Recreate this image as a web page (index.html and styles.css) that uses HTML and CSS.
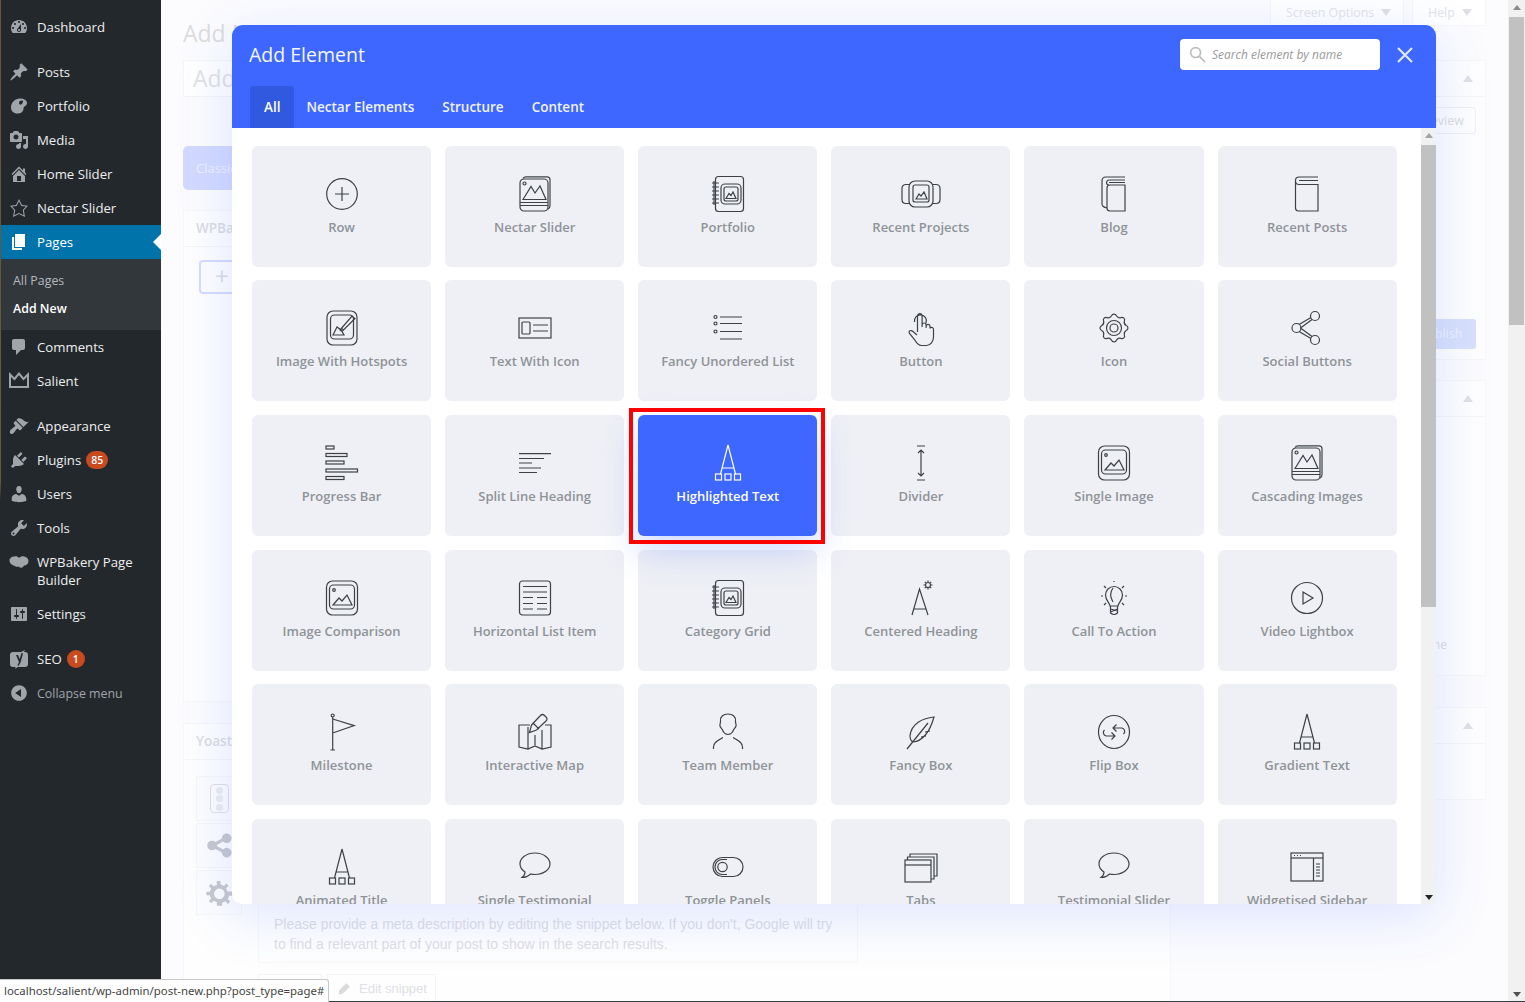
FILE: index.html
```html
<!DOCTYPE html>
<html lang="en">
<head>
<meta charset="utf-8">
<title>Add New Page</title>
<link rel="stylesheet" href="styles.css">
</head>
<body>
<svg class="defs" aria-hidden="true">
  <symbol id="i-row" viewBox="0 0 44 44"><circle cx="22" cy="22" r="15.3"/><path d="M22 15v14M15 22h14"/></symbol>
  <symbol id="i-stack" viewBox="0 0 44 44"><path d="M10 6.500q1-1.700 3-1.700h21q3 0 3 3v26q0 2.500-2.200 3.500"/><rect x="7" y="7" width="28" height="32" rx="4"/><path d="M10 27.500l8-13 4 6.500 5-7 6 13.500z"/><circle cx="11.500" cy="11.500" r="1.500"/><path d="M7 30.500h28M7 33.500h28"/></symbol>
  <symbol id="i-notebook" viewBox="0 0 44 44"><rect x="9.500" y="4.500" width="28" height="35" rx="3"/><rect x="15" y="12" width="20" height="20" rx="4"/><rect x="18" y="15" width="14" height="14" rx="2"/><path d="M20 26.500l3-5 2 2 2-3.500 3 6.500zM6 11h7M6 15h7M6 19h7M6 23h7M6 27h7M6 31h7M8 9v24"/></symbol>
  <symbol id="i-projects" viewBox="0 0 44 44"><rect x="10" y="9" width="24" height="26" rx="6"/><rect x="14" y="13" width="16" height="17" rx="2"/><path d="M17 27l3-5 2 2 3-4 3 7zM10 12.500H7q-4 0-4 4v11q0 4 4 4h3M34 12.500h3q4 0 4 4v11q0 4-4 4h-3"/></symbol>
  <symbol id="i-blog" viewBox="0 0 44 44"><path d="M33 13v26H18q-3 0-3-3V16q0-3 3-3zM33 5H14q-4 0-4 4v23q0 3 5 4M33 8H17q-2 0-2.500 2.500 0 2.500 2.500 2.500M33 10.500H17"/></symbol>
  <symbol id="i-book" viewBox="0 0 44 44"><path d="M33 5H14q-3.500 0-3.500 3.500v27.500q0 3 3 3H33V12.500H14q-3.500 0-3.500-3.500M33 8.500H14"/></symbol>
  <symbol id="i-hotspot" viewBox="0 0 44 44"><rect x="7" y="5" width="30" height="34" rx="6"/><rect x="10.500" y="9" width="23" height="24" rx="4"/><path d="M13 29l4-8 4 3 3 5zM20 24l12-14 3 2.500-13 13zM21 22l2.500 2"/></symbol>
  <symbol id="i-texticon" viewBox="0 0 44 44"><rect x="6" y="12" width="32" height="20"/><rect x="9" y="16" width="8" height="12" rx="1"/><path class="thick" d="M20 19h15M20 25h15"/></symbol>
  <symbol id="i-list" viewBox="0 0 44 44"><circle cx="9.500" cy="11" r="1.500"/><circle cx="9.500" cy="17.500" r="1.500"/><circle cx="9.500" cy="25.500" r="1.500"/><path d="M14 11h22M14 17.500h22M14 25.500h22M14 33h22"/></symbol>
  <symbol id="i-hand" viewBox="0 0 44 44"><path d="M15.500 16a6 6 0 1 1 11.500 1M18.500 26V10a2.300 2.300 0 0 1 4.600 0v11M23.100 19a2 2 0 0 1 4 0v3M27.100 20a2 2 0 0 1 3.900 0v2.500M31 22a2 2 0 0 1 3.500 1.500v7.500c0 4.500-3 8.500-7 8.500h-5c-3 0-5-2.500-7-6l-5-6c-1.500-2.500 1.500-4 3.500-2l4 3.500"/></symbol>
  <symbol id="i-gear" viewBox="0 0 44 44"><path transform="rotate(-11.250 22 22)" d="M34.500 22A2.600 2.600 0 0 1 33.550 26.780A4 4 0 0 0 30.840 30.840A2.600 2.600 0 0 1 26.780 33.550A4 4 0 0 0 22 34.500A2.600 2.600 0 0 1 17.220 33.550A4 4 0 0 0 13.160 30.840A2.600 2.600 0 0 1 10.450 26.780A4 4 0 0 0 9.500 22A2.600 2.600 0 0 1 10.450 17.220A4 4 0 0 0 13.160 13.160A2.600 2.600 0 0 1 17.220 10.450A4 4 0 0 0 22 9.500A2.600 2.600 0 0 1 26.780 10.450A4 4 0 0 0 30.840 13.160A2.600 2.600 0 0 1 33.550 17.220A4 4 0 0 0 34.500 22Z"/><circle cx="22" cy="22" r="7.500"/><circle cx="22" cy="22" r="4"/></symbol>
  <symbol id="i-share" viewBox="0 0 44 44"><circle cx="11.500" cy="22" r="4.500"/><circle cx="30" cy="10" r="4.500"/><circle cx="30" cy="34" r="4.500"/><path d="M14 18.500l12-7M15.500 22l11.500-8.500M15.500 22l11.500 8.500M14 25.500l12 7"/></symbol>
  <symbol id="i-bars" viewBox="0 0 44 44"><rect x="6" y="5" width="8" height="3"/><rect x="6" y="12.500" width="21" height="3"/><rect x="6" y="20" width="18" height="3"/><rect x="6" y="28" width="31.500" height="3"/><rect x="6" y="35.500" width="18" height="3"/></symbol>
  <symbol id="i-split" viewBox="0 0 44 44"><path class="thick" d="M6 12.600h32M6 17.500h25M6 22h13M6 27h22M6 31.500h18"/></symbol>
  <symbol id="i-atext" viewBox="0 0 44 44"><path d="M22 4l-7.500 29M22 4l7.500 29M16 27h12"/><rect x="9.500" y="33" width="6" height="6"/><rect x="19" y="33" width="6" height="6"/><rect x="28.500" y="33" width="6" height="6"/></symbol>
  <symbol id="i-divider" viewBox="0 0 44 44"><path d="M18 5h8M18 39h8M22 9v26M19 12l3-3 3 3M19 32l3 3 3-3"/></symbol>
  <symbol id="i-image" viewBox="0 0 44 44"><rect x="6.500" y="5" width="31" height="34" rx="6"/><rect x="9.500" y="9" width="25" height="24" rx="4"/><circle cx="14" cy="14" r="1.300"/><path d="M13 29l6-7 3 3 5-6 5 10z"/></symbol>
  <symbol id="i-hlist" viewBox="0 0 44 44"><rect x="6.500" y="5" width="31" height="34" rx="3"/><path class="thick" d="M10 10.500h24M10 16h24M10 21.500h10M24 21.500h10M10 27.500h10M24 27.500h10M10 33h10M24 33h10"/></symbol>
  <symbol id="i-centered" viewBox="0 0 44 44"><path d="M13 39l7.500-26L29 39M15 33h12"/><circle cx="29" cy="9" r="2.500"/><path d="M29 4.500v1.500M29 12v1.500M24.500 9h1.500M32 9h1.500M25.800 5.800l1 1M31.200 11.200l1 1M25.800 12.200l1-1M31.200 6.800l1-1"/></symbol>
  <symbol id="i-bulb" viewBox="0 0 44 44"><path d="M18 30c0-3-4.500-5-4.500-11a8.500 8.500 0 0 1 17 0c0 6-4.500 8-4.500 11zM21 12c-3 4-3 9 0 14M18.500 30v7q3.500 3 7 0v-7M18.500 33l7 2M18.500 36l7-3M9 20h2M33 20h2M12 10l2 2M32 10l-2 2M12 29l2-2M32 29l-2-2M22 6v-1"/></symbol>
  <symbol id="i-play" viewBox="0 0 44 44"><circle cx="22" cy="22" r="15.500"/><path d="M18 16l10 6-10 6z"/></symbol>
  <symbol id="i-flag" viewBox="0 0 44 44"><circle cx="12.700" cy="5.500" r="1.500"/><path d="M12.700 7v33M10.500 40h4.500M12.700 9l21.500 6.600-21.500 7.400"/></symbol>
  <symbol id="i-map" viewBox="0 0 44 44"><path d="M17 15H6v22l9 2 7-3 7 3 9-2V15h-6M15 17v22M22 25v11M29 20v19M18.500 15l9-9.500q2-2 4 0l1.500 1.500q2 2 0 4l-9.500 9-7 2.500zM20 13l6 6"/></symbol>
  <symbol id="i-person" viewBox="0 0 44 44"><path d="M22 4c-5 0-8 3-7.500 7 .2 2-1 3-.5 5 .5 2 2 2.500 2.800 4.500.5 1.500 2.500 4 5.200 4s4.700-2.500 5.200-4c.8-2 2.300-2.500 2.800-4.500.5-2-.7-3-.5-5 .5-4-2.500-7-7.500-7zM7.500 39v-2c0-5 5-6.500 9.500-9.500M36.500 39v-2c0-5-5-6.500-9.500-9.500"/></symbol>
  <symbol id="i-feather" viewBox="0 0 44 44"><path d="M35 7C25 8 12 13 11 26c0 3 1 5 3 6 10-1 17-11 21-25zM8 39L29 13M26 22l5-1M22 27l5-1"/></symbol>
  <symbol id="i-flip" viewBox="0 0 44 44"><ellipse cx="22" cy="22" rx="15.500" ry="16.500"/><path d="M30 18H21M24.500 14.500L21 18l3.500 3.500M30 18a3.500 3.500 0 0 1 1.500 6M14 26h9M19.500 22.500L23 26l-3.500 3.500M14 26a3.500 3.500 0 0 1-1.500-6"/></symbol>
  <symbol id="i-bubble" viewBox="0 0 44 44"><path d="M22 8C13.200 8 7 13 7 19c0 3.500 2 6 5 8 0 2-1 4-3 5.500 4 0 7-2 8.500-3.500 1.500.3 3 .5 4.500.5 8.800 0 15-5 15-10.500S30.800 8 22 8z"/></symbol>
  <symbol id="i-toggle" viewBox="0 0 44 44"><rect x="7" y="12.500" width="30" height="19" rx="9.500"/><path d="M21 14.500h-4.500a7.500 7.500 0 0 0 0 15H21"/><circle cx="16.500" cy="22" r="4.700"/></symbol>
  <symbol id="i-tabs" viewBox="0 0 44 44"><rect x="6" y="15" width="26" height="22"/><path class="thick" d="M6 20h26"/><path d="M8.500 15v-3H35v22h-3M11 12V9h27v22h-3"/></symbol>
  <symbol id="i-widget" viewBox="0 0 44 44"><rect x="6" y="8" width="32" height="28"/><path class="thick" d="M6 13h32"/><path d="M28.500 13v23M9 10.500h1M12 10.500h1M15 10.500h1"/><path class="thick" d="M31 19h4M31 22h4M31 25h4M31 28h4M31 31h4"/></symbol>
</svg>

<div class="layout">
  <nav class="sidebar">
    <ul class="menu">
      <li class="item"><svg class="dash" viewBox="0 0 20 20"><path d="M3.760 16h12.480c1.100-1.370 1.760-3.110 1.760-5 0-4.420-3.580-8-8-8s-8 3.580-8 8c0 1.890.660 3.630 1.760 5zM10 4c.550 0 1 .450 1 1s-.450 1-1 1-1-.450-1-1 .450-1 1-1zM6 6c.550 0 1 .450 1 1s-.450 1-1 1-1-.450-1-1 .450-1 1-1zm8 0c.550 0 1 .450 1 1s-.450 1-1 1-1-.450-1-1 .450-1 1-1zm-5.370 5.550L12 7v6c0 1.100-.900 2-2 2s-2-.900-2-2c0-.570.240-1.080.630-1.450zM4 10c.550 0 1 .450 1 1s-.450 1-1 1-1-.450-1-1 .450-1 1-1zm12 0c.550 0 1 .450 1 1s-.450 1-1 1-1-.450-1-1 .450-1 1-1zm-5 3c0-.550-.450-1-1-1s-1 .450-1 1 .450 1 1 1 1-.450 1-1z"/></svg>Dashboard</li>
      <li class="item sep"><svg class="dash" viewBox="0 0 20 20"><path d="M10.440 3.020l1.820-1.820 6.360 6.350-1.830 1.820c-1.050-.680-2.480-.570-3.410.360l-.750.750c-.920.930-1.040 2.350-.350 3.410l-1.830 1.820-2.410-2.410-2.800 2.790c-.420.420-3.380 2.710-3.800 2.290s1.860-3.390 2.280-3.810l2.790-2.790L4.100 9.360l1.830-1.820c1.050.690 2.480.570 3.400-.360l.750-.750c.930-.920 1.050-2.350.360-3.410z"/></svg>Posts</li>
      <li class="item"><svg class="dash" viewBox="0 0 20 20"><path fill-rule="evenodd" d="M11 2.500c4 0 7 2 7 4.500 0 3-3.500 3-3.500 5.500 0 3-2.500 5-6 5C4.500 17.500 2 15 2 11.500 2 6.500 6 2.500 11 2.500zM12.500 4.500c-1.500 0-2.500 1-2.500 2.300S11 9 12 8.500s2-2 2-3-.5-1-1.500-1z"/></svg>Portfolio</li>
      <li class="item"><svg class="dash" viewBox="0 0 20 20"><path d="M13 11V4c0-.550-.450-1-1-1h-1.670L9 1H5L3.670 3H2c-.550 0-1 .450-1 1v7c0 .550.450 1 1 1h10c.550 0 1-.450 1-1zM7 4.500c1.380 0 2.500 1.120 2.500 2.500S8.380 9.500 7 9.500 4.500 8.380 4.500 7 5.620 4.500 7 4.500zM14 6h5v10.500c0 1.380-1.120 2.500-2.500 2.500S14 17.880 14 16.500s1.120-2.500 2.500-2.500c.170 0 .340.020.500.050V9h-3V6zm-4 8.050V13h2v3.500c0 1.380-1.120 2.500-2.500 2.500S7 17.880 7 16.500 8.120 14 9.500 14c.170 0 .340.020.500.050z"/></svg>Media</li>
      <li class="item"><svg class="dash" viewBox="0 0 20 20"><path d="M16 8.500l1.530 1.530-1.060 1.060L10 4.620l-6.470 6.470-1.060-1.060L10 2.500l4 4v-2h2v4zm-6-2.460l6 5.990V18H4v-5.970zM12 17v-5H8v5h4z"/></svg>Home Slider</li>
      <li class="item"><svg class="dash" viewBox="0 0 20 20"><path d="M10 1L7 7l-6 .750 4.130 4.620L4 19l6-3 6 3-1.120-6.630L19 7.750 13 7zm0 2.240l2.340 4.690 4.650.580-3.180 3.560.870 5.150L10 14.880l-4.680 2.340.870-5.150-3.180-3.560 4.650-.580z"/></svg>Nectar Slider</li>
      <li class="item active"><svg class="dash" viewBox="0 0 20 20"><path d="M6 15V2h10v13H6zm-1 1h8v2H3V5h2v11z"/></svg>Pages</li>
      <li class="submenu">
        <div class="subitem">All Pages</div>
        <div class="subitem current">Add New</div>
      </li>
      <li class="item"><svg class="dash" viewBox="0 0 20 20"><path d="M5 2h9c1.100 0 2 .900 2 2v7c0 1.100-.900 2-2 2h-2l-5 5v-5H5c-1.100 0-2-.900-2-2V4c0-1.100.900-2 2-2z"/></svg>Comments</li>
      <li class="item"><svg class="dash crown" viewBox="0 0 20 20"><path d="M1 3.500v12.500h18V3.500l-4.500 4.500L10 2.500 5.500 8z"/></svg>Salient</li>
      <li class="item sep"><svg class="dash" viewBox="0 0 20 20"><path d="M14.480 11.060L7.410 3.990l1.500-1.500c.500-.560 2.300-.470 3.510.320 1.210.800 1.430 1.280 2.910 2.100 1.180.640 2.450 1.260 4.450.850zm-.710.710L6.700 4.700 4.930 6.470c-.390.390-.390 1.020 0 1.410l1.060 1.060c.390.390.390 1.030 0 1.420-.600.600-1.430 1.110-2.210 1.690-.350.260-.700.530-1.010.840C1.430 13.230.400 15.500 1 17c.700 1.500 3 1.300 4.270-.800.310-.310.580-.660.840-1.010.580-.780 1.090-1.610 1.690-2.210.390-.390 1.020-.390 1.410 0l1.060 1.060c.390.390 1.020.390 1.410 0z"/></svg>Appearance</li>
      <li class="item"><svg class="dash" viewBox="0 0 20 20"><path d="M13.110 4.360L9.870 7.600 8 5.730l3.240-3.240c.350-.340 1.050-.200 1.560.320.520.510.660 1.210.310 1.550zm-8 1.770l.910-1.120 9.010 9.010-1.190.840c-.710.710-2.630 1.160-3.820 1.160H6.140L4.900 17.260c-.590.590-1.540.590-2.120 0-.590-.580-.590-1.530 0-2.120l1.240-1.240v-3.880c0-1.130.400-3.190 1.090-3.890zm7.260 3.970l3.240-3.240c.340-.350 1.040-.210 1.550.310.520.510.660 1.210.310 1.550l-3.240 3.250z"/></svg>Plugins<span class="badge wide">85</span></li>
      <li class="item"><svg class="dash" viewBox="0 0 20 20"><path d="M10 9.250c-2.270 0-2.730-3.440-2.730-3.440C7 4.020 7.820 2 9.970 2c2.160 0 2.980 2.020 2.710 3.810 0 0-.410 3.440-2.680 3.440zm0 2.570L12.720 10c2.390 0 4.520 2.330 4.520 4.530v2.490s-3.650 1.130-7.240 1.130c-3.650 0-7.240-1.130-7.240-1.130v-2.490c0-2.250 1.940-4.480 4.470-4.480z"/></svg>Users</li>
      <li class="item"><svg class="dash" viewBox="0 0 20 20"><path d="M16.680 9.770c-1.340 1.340-3.300 1.670-4.950.990l-5.410 6.520c-.990.990-2.590.990-3.580 0s-.990-2.590 0-3.570l6.520-5.420c-.680-1.650-.350-3.610.990-4.950 1.280-1.280 3.120-1.620 4.720-1.060l-2.890 2.890 2.820 2.820 2.860-2.870c.530 1.580.180 3.390-1.080 4.650zM3.810 16.210c.400.390 1.040.390 1.430 0 .400-.400.400-1.040 0-1.430-.390-.400-1.030-.400-1.430 0-.390.390-.390 1.030 0 1.430z"/></svg>Tools</li>
      <li class="item tall"><svg class="dash" viewBox="0 0 20 20"><path d="M5.500 3.500C7.500 3 9 3.800 10 5c1.300-1.300 3.500-2 5.500-1.500 2.500.5 4 2.500 4 4.500 0 2.500-2 4.500-4.500 4.500-.5 1.500-2 2.500-3.500 2-1 0-1.500-.5-2-1-1 .5-2.500.5-3.500-.5C3.500 12.500.5 10.500.5 7.500.5 5 3 3.500 5.500 3.500z"/></svg><span>WPBakery Page Builder</span></li>
      <li class="item"><svg class="dash" viewBox="0 0 20 20"><path d="M18 16V4c0-.550-.450-1-1-1H3c-.550 0-1 .450-1 1v12c0 .550.450 1 1 1h14c.550 0 1-.450 1-1zM8 11h1c.550 0 1 .450 1 1s-.450 1-1 1H8v1.500c0 .280-.220.500-.500.500s-.500-.220-.500-.500V13H6c-.550 0-1-.450-1-1s.450-1 1-1h1V5.500c0-.280.220-.500.500-.500s.500.220.500.500V11zm5-2h-1c-.550 0-1-.450-1-1s.450-1 1-1h1V5.500c0-.280.220-.500.500-.500s.500.220.500.500V7h1c.550 0 1 .450 1 1s-.450 1-1 1h-1v5.500c0 .280-.220.500-.500.500s-.500-.220-.500-.500V9z"/></svg>Settings</li>
      <li class="item sep"><svg class="dash" viewBox="0 0 20 20"><path fill-rule="evenodd" d="M4 3h8l4-2-1 2h1q3 0 3 3v9q0 3-3 3H8.500l-2 2v-2H4q-3 0-3-3V6q0-3 3-3zM7 6l3 7-1.500 3 1 1 2-3.500L14 4.500 12.500 4l-1.800 6L9 6z"/></svg>SEO<span class="badge">1</span></li>
      <li class="item collapse"><svg class="dash" viewBox="0 0 20 20"><path d="M10 2.160c4.330 0 7.840 3.510 7.840 7.840s-3.510 7.840-7.840 7.840S2.160 14.330 2.160 10 5.710 2.160 10 2.160zm2 11.720V6.120L6.180 9.970z"/></svg>Collapse menu</li>
    </ul>
  </nav>

  <main class="page">
    <header class="page-head">
      <h1 class="page-title">Add New Page</h1>
      <div class="screen-tabs">
        <div class="screen-tab opts">Screen Options<i class="tri down faint"></i></div>
        <div class="screen-tab help">Help<i class="tri down faint"></i></div>
      </div>
    </header>
    <div class="columns">
      <div class="col-main">
        <div class="title-input">Add title</div>
        <div class="classic-btn">Classic Mode</div>
        <section class="panel builder">
          <div class="panel-head">WPBakery Page Builder</div>
          <div class="add-btn">+</div>
        </section>
        <section class="panel yoast">
          <div class="panel-head">Yoast SEO</div>
          <div class="yoast-body">
            <div class="yoast-tabs">
              <div class="yoast-tab"><div class="traffic"><b></b><b></b><b></b></div></div>
              <div class="yoast-tab"><svg class="yoast-icon" viewBox="0 0 24 24"><path d="M18 2a4 4 0 1 1-3 6.700L9.800 11.500a4 4 0 0 1 0 1l5.200 2.800A4 4 0 1 1 14 18v-.3l-5.300-2.900a4 4 0 1 1 0-5.600L14 6.300V6a4 4 0 0 1 4-4z"/></svg></div>
              <div class="yoast-tab"><svg class="yoast-icon big" viewBox="0 0 20 20"><path d="M18 12h-2.180c-.170.700-.470 1.350-.850 1.940l1.540 1.540-1.430 1.430-1.540-1.540c-.590.380-1.240.680-1.940.850V18H8.400v-2.180c-.700-.170-1.350-.470-1.940-.850l-1.540 1.540-1.430-1.430 1.540-1.540c-.380-.590-.680-1.240-.850-1.940H2V9.600h2.180c.170-.700.470-1.350.850-1.940L3.490 6.120l1.430-1.430 1.540 1.540c.590-.380 1.240-.680 1.940-.850V3h2.200v2.180c.700.170 1.350.470 1.940.850l1.540-1.540 1.430 1.430-1.540 1.540c.380.590.680 1.240.850 1.940H18V12zm-8.100 2a3.200 3.200 0 1 0 0-6.400 3.200 3.200 0 0 0 0 6.400z"/></svg></div>
            </div>
            <div class="yoast-content">
              <div class="snippet">Please provide a meta description by editing the snippet below. If you don't, Google will try to find a relevant part of your post to show in the search results.</div>
              <div class="snippet-actions">
                <div class="ghost-btn small"></div>
                <div class="ghost-btn"><svg class="pencil" viewBox="0 0 20 20"><path d="M13.890 3.390l2.710 2.720c.460.460.420 1.240.030 1.640l-8.010 8.020-5.560 1.160 1.160-5.580s7.600-7.630 7.990-8.030c.390-.390 1.220-.390 1.680.070z"/></svg>Edit snippet</div>
              </div>
            </div>
          </div>
        </section>
      </div>
      <aside class="col-side">
        <section class="panel publish">
          <div class="panel-head side-head"><span>Publish</span><i class="tri up faint"></i></div>
          <div class="side-actions"><div class="preview-btn">Preview</div></div>
          <div class="side-actions"><div class="publish-btn">Publish</div></div>
        </section>
        <section class="panel attrs">
          <div class="panel-head side-head"><span>Page Attributes</span><i class="tri up faint"></i></div>
          <p class="side-note">If you need help, use the Help tab above the screen title.</p>
        </section>
        <section class="panel featured">
          <div class="panel-head side-head"><span>Featured Image</span><i class="tri up faint"></i></div>
        </section>
      </aside>
    </div>
  </main>

  <div class="page-scroll">
    <i class="tri up"></i>
    <div class="page-thumb"></div>
    <i class="tri down end"></i>
  </div>
</div>

<section class="modal">
  <header class="modal-head">
    <div class="modal-top">
      <h2 class="modal-title">Add Element</h2>
      <div class="search">
        <svg class="search-icon" viewBox="0 0 18 18"><circle cx="7" cy="7" r="5.200"/><path d="M11 11l6 6"/></svg>
        <span>Search element by name</span>
      </div>
      <svg class="close" viewBox="0 0 16 16"><path d="M1 1l14 14M15 1L1 15"/></svg>
    </div>
    <div class="tabs">
      <div class="tab selected">All</div>
      <div class="tab">Nectar Elements</div>
      <div class="tab">Structure</div>
      <div class="tab">Content</div>
    </div>
  </header>
  <div class="modal-body">
    <div class="elements">
      <div class="card"><svg class="ico"><use href="#i-row"/></svg><span>Row</span></div>
      <div class="card"><svg class="ico"><use href="#i-stack"/></svg><span>Nectar Slider</span></div>
      <div class="card"><svg class="ico"><use href="#i-notebook"/></svg><span>Portfolio</span></div>
      <div class="card"><svg class="ico"><use href="#i-projects"/></svg><span>Recent Projects</span></div>
      <div class="card"><svg class="ico"><use href="#i-blog"/></svg><span>Blog</span></div>
      <div class="card"><svg class="ico"><use href="#i-book"/></svg><span>Recent Posts</span></div>

      <div class="card"><svg class="ico"><use href="#i-hotspot"/></svg><span>Image With Hotspots</span></div>
      <div class="card"><svg class="ico"><use href="#i-texticon"/></svg><span>Text With Icon</span></div>
      <div class="card"><svg class="ico"><use href="#i-list"/></svg><span>Fancy Unordered List</span></div>
      <div class="card"><svg class="ico"><use href="#i-hand"/></svg><span>Button</span></div>
      <div class="card"><svg class="ico"><use href="#i-gear"/></svg><span>Icon</span></div>
      <div class="card"><svg class="ico"><use href="#i-share"/></svg><span>Social Buttons</span></div>

      <div class="card"><svg class="ico"><use href="#i-bars"/></svg><span>Progress Bar</span></div>
      <div class="card"><svg class="ico"><use href="#i-split"/></svg><span>Split Line Heading</span></div>
      <div class="card hover"><svg class="ico"><use href="#i-atext"/></svg><span>Highlighted Text</span></div>
      <div class="card"><svg class="ico"><use href="#i-divider"/></svg><span>Divider</span></div>
      <div class="card"><svg class="ico"><use href="#i-image"/></svg><span>Single Image</span></div>
      <div class="card"><svg class="ico"><use href="#i-stack"/></svg><span>Cascading Images</span></div>

      <div class="card"><svg class="ico"><use href="#i-image"/></svg><span>Image Comparison</span></div>
      <div class="card"><svg class="ico"><use href="#i-hlist"/></svg><span>Horizontal List Item</span></div>
      <div class="card"><svg class="ico"><use href="#i-notebook"/></svg><span>Category Grid</span></div>
      <div class="card"><svg class="ico"><use href="#i-centered"/></svg><span>Centered Heading</span></div>
      <div class="card"><svg class="ico"><use href="#i-bulb"/></svg><span>Call To Action</span></div>
      <div class="card"><svg class="ico"><use href="#i-play"/></svg><span>Video Lightbox</span></div>

      <div class="card"><svg class="ico"><use href="#i-flag"/></svg><span>Milestone</span></div>
      <div class="card"><svg class="ico"><use href="#i-map"/></svg><span>Interactive Map</span></div>
      <div class="card"><svg class="ico"><use href="#i-person"/></svg><span>Team Member</span></div>
      <div class="card"><svg class="ico"><use href="#i-feather"/></svg><span>Fancy Box</span></div>
      <div class="card"><svg class="ico"><use href="#i-flip"/></svg><span>Flip Box</span></div>
      <div class="card"><svg class="ico"><use href="#i-atext"/></svg><span>Gradient Text</span></div>

      <div class="card"><svg class="ico"><use href="#i-atext"/></svg><span>Animated Title</span></div>
      <div class="card"><svg class="ico"><use href="#i-bubble"/></svg><span>Single Testimonial</span></div>
      <div class="card"><svg class="ico"><use href="#i-toggle"/></svg><span>Toggle Panels</span></div>
      <div class="card"><svg class="ico"><use href="#i-tabs"/></svg><span>Tabs</span></div>
      <div class="card"><svg class="ico"><use href="#i-bubble"/></svg><span>Testimonial Slider</span></div>
      <div class="card"><svg class="ico"><use href="#i-widget"/></svg><span>Widgetised Sidebar</span></div>
    </div>
    <div class="modal-scroll">
      <i class="tri up dark"></i>
      <div class="modal-thumb"></div>
      <i class="tri down end black"></i>
    </div>
  </div>
</section>

<div class="status">localhost/salient/wp-admin/post-new.php?post_type=page#</div>
</body>
</html>
```
FILE: styles.css
```css
* { box-sizing: border-box; }
html, body { margin: 0; height: 1002px; overflow: hidden; }
body { background: #fcfcfe; font-family: "Open Sans", "Liberation Sans", sans-serif; color: #333; }
.defs { display: none; }
.layout { display: flex; height: 1001px; }
body::after { content: ""; position: fixed; left: 0; right: 0; bottom: 0; height: 1px; background: #3a3d40; z-index: 5; }

/* Sidebar */
.sidebar { width: 161px; flex: none; background: #23282d; border-left: 1px solid #23282d; border-image: linear-gradient(#6a533c 0, #6a5a34 48%, #23282d 50%) 1; position: relative; z-index: 3; height: 1002px; }
.menu { list-style: none; margin: 0; padding: 10px 0 0; }
.item { height: 34px; display: flex; align-items: center; gap: 8px; padding-left: 8px; font-size: 13.200px; color: #eee; position: relative; white-space: nowrap; }
.item .dash { width: 20px; height: 20px; flex: none; fill: #a0a5aa; }
.item .crown { fill: none; stroke: #a0a5aa; stroke-width: 2; }
.sep { margin-top: 11px; }
.active { background: #0073aa; color: #fff; }
.active .dash { fill: #fff; }
.active::after { content: ""; position: absolute; right: 0; top: 9px; border: 8px solid transparent; border-right-color: #fff; border-left-width: 0; }
.submenu { background: #32373c; padding: 7px 0 7px 12px; height: 71px; }
.subitem { height: 28px; line-height: 29px; font-size: 12.400px; color: #b4b9be; }
.subitem.current { color: #fff; font-weight: 600; }
.tall { height: 52px; line-height: 18px; align-items: flex-start; padding-top: 8px; white-space: normal; }
.tall span { width: 110px; }
.badge { width: 18px; height: 18px; border-radius: 9px; background: #ca4a1f; color: #fff; font-size: 10.500px; line-height: 18px; text-align: center; font-weight: 600; margin-left: -3px; }
.badge.wide { width: 22px; }
.collapse { color: #a0a5aa; font-size: 12.400px; }

/* Faded page behind the modal */
.page { flex: 1; min-width: 0; padding-left: 22px; padding-right: 22px; overflow: hidden; color: #dcdce2; }
.page-head { display: flex; justify-content: space-between; align-items: flex-start; height: 46px; }
.page-title { margin: 19px 0 0; font-size: 23px; line-height: 28px; font-weight: 400; color: #dcdcdc; white-space: nowrap; }
.screen-tabs { display: flex; gap: 8px; }
.screen-tab { height: 26px; background: #fff; border: 1px solid #f6f6f8; border-top: 0; font-size: 12.400px; color: #e3e3ea; display: flex; align-items: center; gap: 7px; padding: 0 0 1px 15px; white-space: nowrap; }
.opts { width: 134px; }
.help { width: 74px; }
.columns { display: grid; grid-template-columns: 988px 300px; gap: 15px; margin-top: 14px; }
.title-input { height: 37px; background: #fff; border: 1px solid #f5f5f7; padding-left: 9px; font-size: 23px; line-height: 35px; color: #e2e2e4; }
.classic-btn { height: 44px; margin-top: 49px; background: #d3daff; border-radius: 5px; color: #eef1ff; font-size: 13px; line-height: 44px; padding-left: 13px; }
.panel { background: #fefefe; border: 1px solid #f7f7f9; }
.panel-head { height: 36px; border-bottom: 1px solid #f6f6f8; padding-left: 12px; font-size: 13.500px; line-height: 35px; color: #dcdce2; font-weight: 600; }
.builder { height: 492px; margin-top: 20px; }
.add-btn { width: 100px; height: 34px; margin: 13px 0 0 15px; border: 2px solid #d5dcff; border-radius: 4px; font-size: 24px; line-height: 28px; color: #dcdce2; padding-left: 14px; }
.yoast { height: 300px; margin-top: 21px; }
.yoast-body { display: flex; padding: 16px 0 0 12px; }
.yoast-tabs { width: 46px; flex: none; display: flex; flex-direction: column; gap: 2px; }
.yoast-tab { height: 45px; background: #fdfdfe; border: 1px solid #f7f7f9; display: flex; align-items: center; justify-content: center; }
.traffic { width: 19px; height: 29px; border: 1.500px solid #e0e0e8; border-radius: 4px; display: flex; flex-direction: column; align-items: center; justify-content: space-evenly; }
.traffic b { width: 7px; height: 7px; border-radius: 50%; background: #ebebf0; }
.yoast-icon { width: 29px; height: 29px; fill: #c8c8ce; }
.yoast-icon.big { width: 33px; height: 33px; }
.yoast-content { margin-left: 16px; padding-top: 130px; }
.snippet { width: 600px; height: 57px; padding: 8px 15px; border: 1px solid #f7f7f9; border-top: 0; font-family: "Liberation Sans", Arial, sans-serif; font-size: 14px; line-height: 20px; color: #dedee6; }
.snippet-actions { display: flex; gap: 5px; margin-top: 11px; }
.ghost-btn { width: 109px; height: 34px; border: 1px solid #f4f4f6; display: flex; align-items: flex-start; gap: 7px; padding: 6px 0 0 8px; font-family: "Liberation Sans", Arial, sans-serif; font-size: 13px; color: #e0e0e6; }
.ghost-btn.small { width: 64px; background: #fff; }
.pencil { width: 16px; height: 16px; fill: #dadada; flex: none; }
.col-side { display: flex; flex-direction: column; }
.publish { height: 300px; }
.side-head { display: flex; justify-content: space-between; align-items: center; padding-right: 12px; }
.side-actions { display: flex; justify-content: flex-end; padding: 10px 9px 0 0; }
.preview-btn { width: 70px; height: 27px; border: 1px solid #f0f0f4; border-radius: 3px; font-size: 12.500px; line-height: 25px; text-align: center; color: #dcdce2; }
.publish-btn { width: 70px; height: 30px; margin-top: 175px; background: #d8e1fb; border-radius: 3px; font-size: 12.500px; line-height: 30px; text-align: center; color: #eef2ff; }
.attrs { height: 296px; margin-top: 20px; }
.side-note { margin: 0; padding: 219px 30px 0 8px; font-size: 12px; line-height: 18px; word-spacing: .6px; color: #dcdce2; }
.featured { height: 93px; margin-top: 31px; }

.tri { display: block; width: 0; height: 0; border-left: 5px solid transparent; border-right: 5px solid transparent; }
.tri.up { border-bottom: 7px solid #8a8a8a; }
.tri.down { border-top: 7px solid #505050; }
.tri.faint.up { border-bottom-color: #e0e0e6; }
.tri.faint.down { border-top-color: #e0e0e6; }

.page-scroll { width: 17px; flex: none; background: #f1f1f1; display: flex; flex-direction: column; align-items: center; padding-top: 5px; height: 1001px; }
.page-scroll .tri { border-left-width: 4px; border-right-width: 4px; border-top-width: 5px; border-bottom-width: 5px; }
.page-thumb { width: 15px; height: 308px; background: #c1c1c1; margin-top: 7px; }
.page-scroll .end { margin-top: auto; margin-bottom: 4px; }

/* Modal */
.modal { position: absolute; left: 232px; top: 25px; width: 1204px; height: 879px; background: #fff; border-radius: 11px 11px 0 10px; z-index: 2; box-shadow: 0 12px 55px rgba(61, 103, 255, .17); display: flex; flex-direction: column; }
.modal-head { height: 103px; flex: none; background: #3d67ff; border-radius: 11px 11px 0 0; display: flex; flex-direction: column; }
.modal-top { height: 61px; display: flex; align-items: center; padding: 0 23px 2px 17px; }
.modal-title { margin: 0; flex: 1; font-size: 19.500px; font-weight: 400; color: #f5f7ff; }
.search { width: 200px; height: 31px; background: #fff; border-radius: 4px; display: flex; align-items: center; gap: 6px; padding-left: 9px; font-size: 12px; font-style: italic; color: #9a9a9a; }
.search-icon { width: 17px; height: 17px; fill: none; stroke: #bdbdbd; stroke-width: 1.800; flex: none; }
.close { width: 16px; height: 16px; margin-left: 17px; fill: none; stroke: #dfe6ff; stroke-width: 2.200; }
.tabs { display: flex; padding-left: 18px; height: 42px; }
.tab { padding: 0 14px; font-size: 13.500px; font-weight: 600; line-height: 42px; color: #f0f3ff; }
.tab.selected { background: #3159e0; border-radius: 4px 4px 0 0; color: #fff; margin-right: -2px; }
.modal-body { flex: 1; min-height: 0; display: flex; border-radius: 0 0 0 10px; overflow: hidden; }
.elements { flex: 1; min-width: 0; overflow: hidden; display: grid; grid-template-columns: repeat(6, 179.120px); grid-auto-rows: 121px; gap: 13.700px 14px; padding: 17.600px 0 0 20px; }
.card { position: relative; background: #eff0f5; border-radius: 6px; display: flex; flex-direction: column; align-items: center; padding-top: 26px; color: #3d4146; }
.card span { margin-top: 2px; font-size: 13px; line-height: 18px; font-weight: 600; color: #8e9398; white-space: nowrap; }
.ico { width: 44px; height: 44px; flex: none; fill: none; stroke: currentColor; stroke-width: 1.200; }
.ico .thick { stroke-width: 1.700; stroke: #6f7378; }
.card.hover { background: #3d67ff; color: #fff; z-index: 1; box-shadow: 0 14px 36px rgba(61, 103, 255, .26); }
.card.hover span { color: #fff; }
.card.hover::after { content: ""; position: absolute; left: -9px; top: -7px; right: -8px; bottom: -8px; border: 4px solid #f00; }
.modal-scroll { width: 15px; flex: none; background: #f1f1f1; display: flex; flex-direction: column; align-items: center; padding-top: 5px; }
.modal-scroll .tri { border-left-width: 4px; border-right-width: 4px; border-top-width: 5px; border-bottom-width: 5px; }
.tri.up.dark { border-bottom-color: #a3a3a3; }
.modal-thumb { width: 15px; height: 462px; background: #c1c1c1; margin-top: 7px; }
.modal-scroll .end { margin-top: auto; margin-bottom: 4px; }
.tri.down.black { border-top-color: #222; }

/* Browser status bubble */
.status { position: fixed; left: 0; bottom: 0; z-index: 6; height: 23px; width: 329px; background: #fff; border: 1px solid #c8c8c8; border-left: 0; border-bottom: 0; border-top-right-radius: 3px; padding-left: 4px; font-family: "Noto Sans", sans-serif; font-size: 11.400px; line-height: 22px; color: #444; white-space: nowrap; }
```
